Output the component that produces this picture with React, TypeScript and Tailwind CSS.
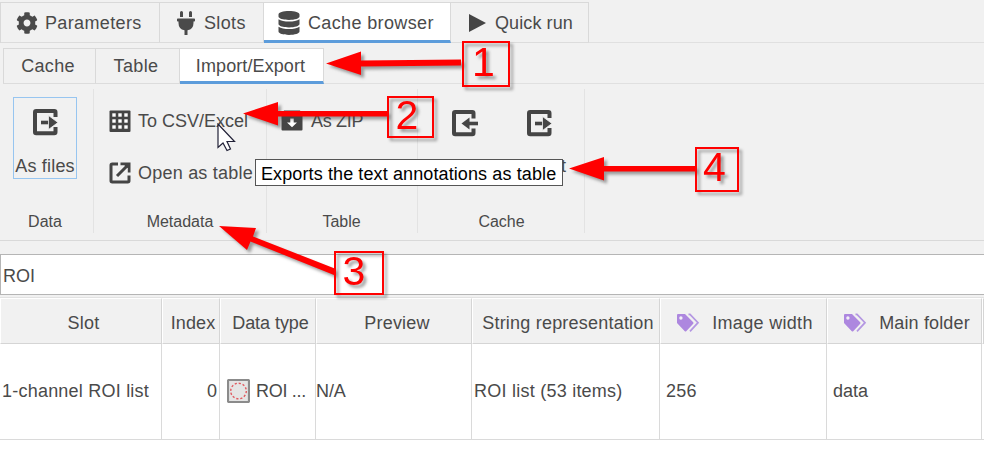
import type { ReactNode } from "react";
import { FaCog, FaPlug, FaDatabase } from "react-icons/fa";

function Tab({ active, className, children }: { active?: boolean; className: string; children: ReactNode }) {
  return (
    <div
      className={`flex shrink-0 items-center whitespace-nowrap border-r border-t border-[#d9d9d9] ${className} ${
        active ? "border-b-[3px] border-b-[#5c9cdb] bg-white pt-[2px]" : "border-b border-b-[#dcdcdc] bg-[#f1f1f1]"
      }`}
    >
      {children}
    </div>
  );
}

function ExportIcon() {
  return (
    <svg width="28" height="30" viewBox="1 0 28 30" fill="none" stroke="#454545" strokeWidth="4">
      <path d="M25.500 10V5.200Q25.500 4 24.300 4H6.200Q5 4 5 5.200V25Q5 26.200 6.200 26.200H24.300Q25.500 26.200 25.500 25V20" />
      <path d="M11 15.500h9" strokeWidth="3.6" />
      <path d="M18.500 8.500l9.500 7-9.500 7z" fill="#454545" stroke="#f1f1f1" strokeWidth="0.8" />
    </svg>
  );
}

function ImportIcon() {
  return (
    <svg width="30" height="30" viewBox="0 0 30 30" fill="none" stroke="#454545" strokeWidth="4">
      <path d="M23.500 10.500V5.200Q23.500 4 22.300 4H5.200Q4 4 4 5.200V25Q4 26.200 5.200 26.200H22.300Q23.500 26.200 23.500 25V20.500" />
      <path d="M18 15.500h10" strokeWidth="3.6" />
      <path d="M19.500 9.500l-8 6 8 6z" fill="#454545" stroke="none" />
    </svg>
  );
}

function GridIcon() {
  return (
    <svg width="22" height="22" viewBox="0 0 22 22" fill="#fff">
      <rect x="0.500" y="0.500" width="21" height="21.500" rx="1" fill="#454545" />
      {[3.3, 9.3, 15.3].map((y) => [3.3, 9.3, 15.3].map((x) => <rect key={`${x}-${y}`} x={x} y={y} width="3.400" height="3.400" />))}
    </svg>
  );
}

function OpenIcon() {
  return (
    <svg width="22" height="22" viewBox="0 0 22 22" fill="none" stroke="#454545" strokeWidth="3">
      <path d="M9 2H3.200Q2 2 2 3.200V18.800Q2 20 3.200 20H18.800Q20 20 20 18.800V13.500" />
      <path d="M8 14L18 4" />
      <path d="M11.500 0.500H21.500V10.500H18.800V6L16.500 5L15.500 3.200H11.500z" fill="#454545" stroke="none" />
    </svg>
  );
}

function ZipIcon() {
  return (
    <svg width="22" height="22" viewBox="0 0 22 22">
      <path d="M3 0.500h16l2.500 4v15q0 1-1 1H1.500q-1 0-1-1V4.500z" fill="#454545" />
      <path d="M9.300 8.500h3.400v4h3.300L11 17.300 6 12.500h3.300z" fill="#fff" />
    </svg>
  );
}

function RoiIcon() {
  return (
    <svg width="23" height="24" viewBox="0 0 23 24" fill="none">
      <rect x="1" y="1" width="21" height="22" rx="1" fill="#e5e5e5" stroke="#8b8b8b" strokeWidth="2.2" />
      <circle cx="11.500" cy="12" r="7.800" stroke="#e05a60" strokeWidth="1.4" strokeDasharray="2.200 1.880" />
    </svg>
  );
}

function TagsIcon() {
  return (
    <svg width="24" height="20" viewBox="0 0 24 20">
      <path d="M2 1H9L17.200 9.300Q17.900 10 17.200 10.700L10.200 18.200Q9.500 18.900 8.800 18.200L1 10V2Q1 1 2 1Z" fill="#ad87df" />
      <circle cx="4.900" cy="5" r="1.700" fill="#f3f0f7" />
      <path d="M12.500 1.300H14L22 9.700 14 18.300" fill="none" stroke="#b497e2" strokeWidth="1.7" />
    </svg>
  );
}

function HeaderCell({ children }: { children: ReactNode }) {
  return (
    <div className="flex items-center justify-center whitespace-nowrap border border-[#d5d5d5] border-l-white border-t-white bg-[#f1f1f1] pt-[3px]">
      {children}
    </div>
  );
}

function Cell({ className = "", children }: { className?: string; children: ReactNode }) {
  return (
    <div className={`flex items-center whitespace-nowrap border-b border-r border-[#dadada] pb-px ${className}`}>{children}</div>
  );
}

const columns = "grid grid-cols-[162px_58px_96px_156px_188px_167px_155px_1fr]";

function Annotations() {
  return (
    <svg
      className="pointer-events-none absolute left-0 top-0 drop-shadow-[3px_3px_1.5px_rgba(70,70,70,0.5)]"
      width="984"
      height="452"
      fill="red"
      fontFamily="'Liberation Sans', Arial, sans-serif"
      fontSize="41"
    >
      <path d="M326 63.500L361 51.500V60.500L461 59.500V65.500L361 66.500V75z" />
      <path d="M243 113.500L278 102V111H388V116.500H278V125.500z" />
      <path d="M219 226L256 228 253 236.500 336 269 334 275 250.500 241.500 247 250z" />
      <path d="M569 168.500L604 157V166H696V171.500H604V180.500z" />
      <g fill="none" stroke="red" strokeWidth="2">
        <rect x="463" y="42" width="46" height="44" />
        <rect x="388" y="97" width="45" height="40" />
        <rect x="335" y="252" width="48" height="42" />
        <rect x="696" y="148" width="42" height="43" />
      </g>
      <text x="472" y="76">1</text>
      <text x="395.500" y="129">2</text>
      <text x="342.500" y="285">3</text>
      <text x="703" y="181">4</text>
    </svg>
  );
}

export default function App() {
  return (
    <div className="relative flex h-[452px] w-[984px] flex-col overflow-hidden bg-[#f1f1f1] font-['Liberation_Sans',Arial,sans-serif] text-[18px] leading-[22px] text-[#4a4a4a]">
      <div className="mt-[2px] flex h-[41px] shrink-0 border-l border-[#d9d9d9]">
        <Tab className="w-[159px] pl-[15px] tracking-[0.36px]">
          <FaCog className="mr-[7px] size-[22px]" />
          Parameters
        </Tab>
        <Tab className="w-[104px] pl-[16px] tracking-[0.35px]">
          <FaPlug className="mr-[8px] h-[24px] w-[20px]" />
          Slots
        </Tab>
        <Tab active className="w-[187px] pl-[14px] tracking-[0.36px]">
          <FaDatabase className="mr-[8px] h-[24px] w-[22px]" />
          Cache browser
        </Tab>
        <Tab className="w-[138px] pl-[18px] tracking-[0.1px]">
          <svg className="mr-[9px]" width="17" height="18" viewBox="0 0 17 18" fill="#454545">
            <path d="M0 0L17 9 0 18z" />
          </svg>
          Quick run
        </Tab>
        <div className="flex-1 border-b border-[#e0e0e0]" />
      </div>

      <div className="mt-[5px] flex h-[36px] shrink-0">
        <div className="w-[3px]" />
        <Tab className="w-[93px] justify-center border-l pr-[3px] tracking-[0.3px]">Cache</Tab>
        <Tab className="w-[84px] justify-center pr-[3px] tracking-[0.4px]">Table</Tab>
        <Tab active className="w-[144px] justify-center pr-[2px] tracking-[0.1px]">Import/Export</Tab>
        <div className="flex-1 border-b border-[#e0e0e0]" />
      </div>

      <div className="flex h-[157px] shrink-0 border-b border-[#d9d9d9] pb-[7px] pt-[5px]">
        <section className="flex w-[94px] flex-col items-center border-r border-[#e3e3e3] pr-[3px] pt-[8px]">
          <div className="flex h-[82px] w-[64px] flex-col items-center border border-[#97c5f0] pt-[9px]">
            <ExportIcon />
            <span className="mt-[18px] whitespace-nowrap tracking-[0.2px]">As files</span>
          </div>
          <span className="mt-[32px] text-[16px]">Data</span>
        </section>
        <section className="flex w-[173px] flex-col border-r border-[#e3e3e3] pl-[15px] pt-[21px]">
          <div className="flex items-center gap-[7px] whitespace-nowrap">
            <GridIcon />
            To CSV/Excel
          </div>
          <div className="mt-[30px] flex items-center gap-[7px] whitespace-nowrap tracking-[0.22px]">
            <OpenIcon />
            Open as table
          </div>
          <span className="mt-[27px] pr-[15px] text-center text-[16px]">Metadata</span>
        </section>
        <section className="flex w-[151px] flex-col border-r border-[#e3e3e3] pl-[14px] pt-[21px]">
          <div className="flex items-center gap-[7px] whitespace-nowrap tracking-[-0.3px]">
            <ZipIcon />
            <span className="pl-px">As ZIP</span>
          </div>
          <span className="mt-[79px] pr-[15px] text-center text-[16px]">Table</span>
        </section>
        <section className="flex w-[167px] flex-col items-center border-r border-[#e3e3e3] pt-[19px]">
          <div className="flex w-full gap-[45px] pl-[32px]">
            <ImportIcon />
            <ExportIcon />
          </div>
          <div className="mt-[17px] flex w-full justify-end pr-[18px]">
            <span>Export</span>
          </div>
          <span className="mt-[34px] pl-px text-[16px]">Cache</span>
        </section>
      </div>

      <div className="mt-[13px] flex h-[41px] shrink-0 items-center border border-r-0 border-[#b5b5b5] bg-white pl-[2px] pt-[2px]">ROI</div>

      <div className="mt-[2px] flex-1 border-t border-[#e2e2e2] bg-white">
        <div className={`${columns} h-[46px]`}>
          <HeaderCell><span className="pl-[5px] tracking-[0.3px]">Slot</span></HeaderCell>
          <HeaderCell><span className="pl-[4px] tracking-[0.1px]">Index</span></HeaderCell>
          <HeaderCell><span className="pl-[5px] tracking-[-0.05px]">Data type</span></HeaderCell>
          <HeaderCell><span className="pl-[6px] tracking-[0.2px]">Preview</span></HeaderCell>
          <HeaderCell><span className="pl-[4px] tracking-[0.21px]">String representation</span></HeaderCell>
          <HeaderCell>
            <span className="flex items-center gap-[12px] pl-[2px] tracking-[0.32px]"><TagsIcon />Image width</span>
          </HeaderCell>
          <HeaderCell>
            <span className="flex items-center gap-[12px] pl-[4px] tracking-[0.15px]"><TagsIcon />Main folder</span>
          </HeaderCell>
          <HeaderCell>{null}</HeaderCell>
        </div>
        <div className={`${columns} h-[96px]`}>
          <Cell className="pl-[2px] tracking-[0.22px]">1-channel ROI list</Cell>
          <Cell className="justify-end pr-[2px]">0</Cell>
          <Cell className="gap-[6px] pl-[7px] tracking-[-0.3px]"><RoiIcon />ROI ...</Cell>
          <Cell className="tracking-[-0.1px]">N/A</Cell>
          <Cell className="pl-[2px] tracking-[0.24px]">ROI list (53 items)</Cell>
          <Cell className="pl-[6px] tracking-[0.3px]">256</Cell>
          <Cell className="pl-[6px]">data</Cell>
          <div className="border-b border-[#dadada]" />
        </div>
      </div>

      <div className="absolute left-[255px] top-[159px] flex h-[27px] w-[308px] items-center whitespace-nowrap border border-[#555] bg-white pl-[5px] pt-[2px] tracking-[0.11px] text-black">
        Exports the text annotations as table
      </div>
      <svg className="absolute left-[217px] top-[123px]" width="20" height="29" viewBox="0 0 20 29" fill="#fff" stroke="#222238" strokeWidth="1.2">
        <path d="M1 1V24.500L6 20 10 27.500 13.500 26 10 18.500H17.500z" />
      </svg>
      <Annotations />
    </div>
  );
}
